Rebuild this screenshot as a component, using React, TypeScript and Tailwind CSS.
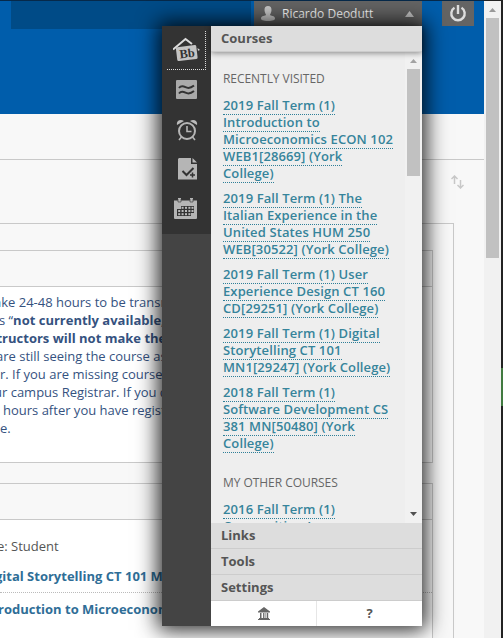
import React from 'react';

const visited: string[][] = [
  ['2019 Fall Term (1)', 'Introduction to', 'Microeconomics ECON 102', 'WEB1[28669] (York', 'College)'],
  ['2019 Fall Term (1) The', 'Italian Experience in the', 'United States HUM 250', 'WEB[30522] (York College)'],
  ['2019 Fall Term (1) User', 'Experience Design CT 160', 'CD[29251] (York College)'],
  ['2019 Fall Term (1) Digital', 'Storytelling CT 101', 'MN1[29247] (York College)'],
  ['2018 Fall Term (1)', 'Software Development CS', '381 MN[50480] (York', 'College)'],
];

function CourseLink({ lines }: { lines: string[] }) {
  return (
    <li className="mb-2 text-[13px] leading-[17px] font-semibold tracking-[0.11px] whitespace-nowrap text-[#36849b]">
      {lines.map((line) => (
        <div key={line}>
          <a className="border-b border-dotted border-[#2f7f98]">{line}</a>
        </div>
      ))}
    </li>
  );
}

function HomeIcon() {
  return (
    <svg width="28" height="26" viewBox="0 0 28 26">
      <path d="M0 12.500 12.500 2 19 7" fill="none" stroke="#ddd" strokeWidth="2" />
      <g transform="rotate(-7 14 16)">
        <rect x="3.500" y="9" width="20.500" height="14" rx="1.500" fill="#c4c4c4" />
        <text x="14" y="20.500" textAnchor="middle" fontFamily="Liberation Serif, serif" fontWeight="700" fontSize="12.500" fill="#333">Bb</text>
      </g>
      <path d="m24.500 11 2.500 2-2 .8z" fill="#ddd" />
    </svg>
  );
}

function UpdatesIcon() {
  return (
    <svg width="21" height="19" viewBox="0 0 21 19">
      <rect width="21" height="19" rx="1" fill="#aaa" />
      <g fill="none" stroke="#333" strokeWidth="2">
        <path d="M3 8c2-2.500 4-2 6.500-.8S15 8 18 5.500" />
        <path d="M3 13.500c2-2.500 4-2 6.500-.8s5.500.8 8.500-1.700" />
      </g>
    </svg>
  );
}

function ClockIcon() {
  return (
    <svg width="22" height="22" viewBox="0 0 22 22" fill="none" stroke="#b5b5b5">
      <circle cx="11" cy="12" r="8" strokeWidth="2" />
      <path d="M11 7v5.500h4.500M5.500 18l-2.500 3M16.500 18l2.500 3" strokeWidth="1.600" />
      <path d="M1 6C0 2 4-.5 8 2zM21 6C22 2 18-.5 14 2z" fill="#bbb" stroke="none" />
    </svg>
  );
}

function GradesIcon() {
  return (
    <svg width="19" height="22" viewBox="0 0 19 22">
      <path d="M1 0h12v6h6v15.500H0V1z" fill="#b5b5b5" />
      <path d="M14.500 0v4.500H19z" fill="#bbb" />
      <path d="m4.500 13 4 4 7-7" fill="none" stroke="#333" strokeWidth="2" />
      <path d="M14.500 14.500v5M12 17h5" stroke="#333" strokeWidth="1.500" />
    </svg>
  );
}

function CalendarIcon() {
  return (
    <svg width="23" height="21" viewBox="0 0 23 21">
      <path d="M0 2.500h4V0h3v2.500h9V0h3v2.500h4V20q0 1-1 1H1q-1 0-1-1z" fill="#b5b5b5" />
      <path d="M4 1v3h3V1M16 1v3h3V1" fill="none" stroke="#444" strokeWidth=".7" />
      <path d="M7 8h13v7h-3v3H3v-7h4z" fill="#333" />
      <g fill="#bbb">
        {[8.8, 12, 15.2].map((y, r) =>
          [4.2, 7.6, 11, 14.4, 17.5].map((x, c) =>
            (r === 0 && c === 0) || (r === 2 && c === 4) ? null : <rect key={`${r}-${c}`} x={x} y={y} width="2" height="2" />
          )
        )}
      </g>
    </svg>
  );
}

function Toolbar() {
  return (
    <header className="relative flex h-[114px] bg-[#005dab]">
      <div className="ml-[11px] h-[29px] w-[240px] bg-[#004b87]" />
      <div className="ml-[3px] flex h-[26px] w-[168px] items-center bg-[#646464] pt-px pl-[7px] text-[12px] text-white">
        <svg width="14" height="15" viewBox="0 0 14 15" className="mr-[7px]">
          <path d="M7 0C4.500 0 3.500 1.500 3.500 4S5 8.500 5 9C4.500 10 0 9.500 0 12.500 0 14 2 15 7 15s7-1 7-2.500C14 9.500 9.500 10 9 9c0-.5 1.500-2.500 1.500-5S9.500 0 7 0z" fill="#c9c9c9" />
        </svg>
        <span>Ricardo Deodutt</span>
        <svg width="9" height="6" viewBox="0 0 9 6" className="mr-2 ml-auto"><path d="M0 6 4.500 0 9 6z" fill="#c8c8c8" /></svg>
      </div>
      <div className="ml-5 flex h-[26px] w-8 items-center justify-center bg-[#646464]">
        <svg width="18" height="18" viewBox="0 0 18 18" fill="none" stroke="#ddd">
          <path d="M5.500 3.800a6.700 6.700 0 1 0 7 0" strokeWidth="2.400" />
          <path d="M9 1v9" strokeWidth="2.400" />
        </svg>
      </div>
      <div className="absolute top-0 left-0 h-px w-full bg-[#06294a]" />
    </header>
  );
}

function Page() {
  return (
    <main className="h-[638px] w-[484px] overflow-hidden bg-[#f8f8f8]">
      <Toolbar />
      <div className="flex h-[46px] border-b border-[#c9c9c9]" />
      <div className="flex h-[63px] items-start justify-end pt-[15px] pr-5">
        <svg width="13" height="14" viewBox="0 0 13 14" fill="none" stroke="#c8c8c8" strokeWidth="1.500">
          <path d="M3.500 9V1M.5 4l3-3 3 3M9.500 5v8M6.500 10l3 3 3-3" />
        </svg>
      </div>
      <div className="h-[500px] w-[454px] border-t border-r border-[#c9c9c9] pt-[26px]">
        <section className="h-[213px] w-[433px] border border-l-0 border-[#c9c9c9] bg-white">
          <div className="h-9 border-b border-[#c9c9c9] bg-[#f8f8f8]" />
          <div className="pt-[6px] text-[13px] leading-[18px] whitespace-nowrap text-[#35527f]">
            <p className="-ml-[6px]">ake 24-48 hours to be transmitted</p>
            <p className="-ml-px">s “<b>not currently available,”</b></p>
            <p className="-ml-[10px] font-bold">structors will not make them</p>
            <p className="-ml-[4px]">are still seeing the course as</p>
            <p>r. If you are missing courses</p>
            <p className="-ml-[6px]">ur campus Registrar. If you do</p>
            <p className="ml-[3px]">hours after you have registered</p>
            <p>e.</p>
          </div>
        </section>
        <section className="mt-5 h-[300px] w-[433px] border border-l-0 border-[#c9c9c9] bg-white">
          <div className="h-9 border-b border-[#c9c9c9] bg-[#f8f8f8]" />
          <div className="pt-[17px] text-[13px] leading-[18px] whitespace-nowrap text-[#555]">
            <p className="-ml-[3px]">e: Student</p>
            <div className="mt-3 h-[26px] border-b border-dotted border-[#bbb] font-bold text-[#2f6e97]">
              <p className="-ml-[9px]">igital Storytelling CT 101 MN1</p>
            </div>
            <p className="mt-[4px] -ml-[2px] pt-[3px] font-bold text-[#2f6e97]">roduction to Microeconomics</p>
          </div>
        </section>
      </div>
    </main>
  );
}

function Menu() {
  return (
    <div className="absolute top-[26px] left-[162px] flex h-[600px] w-[260px] bg-[#444] shadow-[0_0_20px_4px_rgba(0,0,0,0.85)]">
      <nav className="relative flex h-[208px] w-[49px] flex-col items-center bg-[#333]">
        <div className="absolute top-[5px] left-[5px] h-[39px] w-[39px] border-r border-b border-dotted border-[#ddd]" />
        <div className="mt-[11px] h-[26px]"><HomeIcon /></div>
        <div className="mt-[17px] h-[19px]"><UpdatesIcon /></div>
        <div className="mt-[20px] ml-px h-[22px]"><ClockIcon /></div>
        <div className="mt-[17px] ml-[2px] h-[22px]"><GradesIcon /></div>
        <div className="mt-[18px] mr-[2px] h-[21px]"><CalendarIcon /></div>
      </nav>
      <div className="flex w-[211px] flex-col bg-[#eee]">
        <h2 className="z-10 h-[26px] border-b border-[#ccc] bg-[#ddd] pl-[10px] text-[13px] leading-[25px] font-bold text-[#555] shadow-[0_1px_6px_rgba(0,0,0,0.45)]">Courses</h2>
        <div className="flex h-[471px]">
          <div className="w-[194px] overflow-hidden pl-3">
            <h3 className="mt-[18px] mb-[9px] text-[12px] leading-[18px] tracking-[-0.05px] text-[#666]">RECENTLY VISITED</h3>
            <ul>{visited.map((lines, i) => <CourseLink key={i} lines={lines} />)}</ul>
            <h3 className="mt-[22px] mb-[9px] text-[12px] leading-[18px] tracking-[-0.05px] text-[#666]">MY OTHER COURSES</h3>
            <ul><CourseLink lines={['2016 Fall Term (1)', 'Composition I']} /></ul>
          </div>
          <div className="flex w-[17px] flex-col items-center bg-[#f1f1f1]">
            <svg width="7" height="4" viewBox="0 0 7 4" className="mt-[7px]"><path d="M0 4 3.500 0 7 4z" fill="#a3a3a3" /></svg>
            <div className="mt-[6px] h-[107px] w-[13px] bg-[#c1c1c1]" />
            <svg width="7" height="4" viewBox="0 0 7 4" className="mt-auto mb-[7px]"><path d="M0 0 3.500 4 7 0z" fill="#505050" /></svg>
          </div>
        </div>
        {['Links', 'Tools', 'Settings'].map((label) => (
          <h2 key={label} className="h-[26px] border-b border-[#ccc] bg-[#ddd] pl-[10px] text-[13px] leading-[25px] font-bold text-[#555]">{label}</h2>
        ))}
        <footer className="flex h-[25px] bg-white">
          <div className="flex w-[106px] items-center justify-center border-r border-[#e6e6e6]">
            <svg width="12" height="13" viewBox="0 0 12 13" fill="#666"><path d="M6 0 12 4.500v1H0v-1zM2 6h1.500v5H2zM5 6h.9v5H5zM6.600 6h.9v5h-.9zM8.700 6h1.500v5H8.700zM1 11h10v1H1zM0 12h12v1H0z" /></svg>
          </div>
          <div className="flex flex-1 items-center justify-center text-[13px] font-bold text-[#555]">?</div>
        </footer>
      </div>
    </div>
  );
}

export default function App() {
  return (
    <div className="relative flex h-[638px] w-[503px] overflow-hidden bg-[#222] font-['Open_Sans',sans-serif]">
      <Page />
      <div className="flex w-[17px] flex-col items-center border-t border-[#222] bg-[#f1f1f1]">
        <svg width="7" height="4" viewBox="0 0 7 4" className="mt-[7px]"><path d="M0 4 3.500 0 7 4z" fill="#999" /></svg>
        <div className="mt-[6px] h-[240px] w-[13px] bg-[#c1c1c1]" />
      </div>
      <div className="mt-[368px] h-[38px] w-[2px] bg-[#417a40]" />
      <Menu />
    </div>
  );
}
